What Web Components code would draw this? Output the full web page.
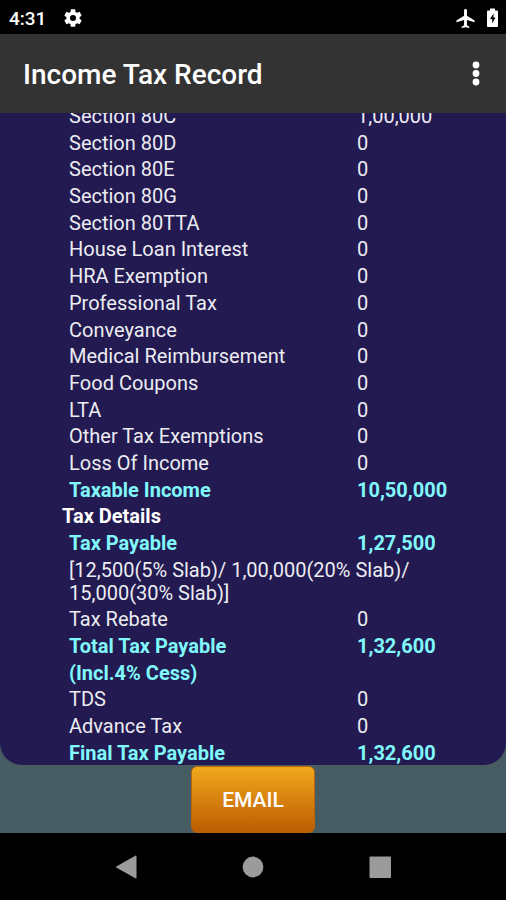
<!DOCTYPE html>
<html lang="en">
<head>
<meta charset="UTF-8">
<meta name="viewport" content="width=device-width, initial-scale=1">
<title>Income Tax Record</title>
<style>
  html, body {
    height: 100%;
    margin: 0;
  }
  body {
    font-family: Roboto, "Liberation Sans", sans-serif;
    font-size: 20px;
    line-height: 23px;
    background: #000;
    --panel: #221a50;
    --highlight: #80f8fc;
    --text: #ececf2;
  }
</style>
</head>
<body>
<tax-app>
  <status-bar slot="top" time="4:31"></status-bar>
  <app-bar slot="top">Income Tax Record</app-bar>
  <tax-record></tax-record>
  <action-button slot="actions">EMAIL</action-button>
  <nav-bar slot="bottom"></nav-bar>
</tax-app>

<script>
  const rows = [
    { label: 'Section 80C', value: '1,00,000' },
    { label: 'Section 80D', value: '0' },
    { label: 'Section 80E', value: '0' },
    { label: 'Section 80G', value: '0' },
    { label: 'Section 80TTA', value: '0' },
    { label: 'House Loan Interest', value: '0' },
    { label: 'HRA Exemption', value: '0' },
    { label: 'Professional Tax', value: '0' },
    { label: 'Conveyance', value: '0' },
    { label: 'Medical Reimbursement', value: '0' },
    { label: 'Food Coupons', value: '0' },
    { label: 'LTA', value: '0' },
    { label: 'Other Tax Exemptions', value: '0' },
    { label: 'Loss Of Income', value: '0' },
    { label: 'Taxable Income', value: '10,50,000', type: 'total' },
    { label: 'Tax Details', type: 'heading' },
    { label: 'Tax Payable', value: '1,27,500', type: 'total' },
    { label: '[12,500(5% Slab)/ 1,00,000(20% Slab)/ 15,000(30% Slab)]', type: 'note' },
    { label: 'Tax Rebate', value: '0' },
    { label: 'Total Tax Payable', value: '1,32,600', type: 'total' },
    { label: '(Incl.4% Cess)', value: '', type: 'total' },
    { label: 'TDS', value: '0' },
    { label: 'Advance Tax', value: '0' },
    { label: 'Final Tax Payable', value: '1,32,600', type: 'total' }
  ];

  class TaxApp extends HTMLElement {
    constructor() {
      super();
      this.attachShadow({ mode: 'open' });
      this.shadowRoot.innerHTML = `
        <style>
          :host {
            display: flex;
            flex-direction: column;
            height: 100%;
          }
          main {
            flex: 1;
            min-height: 0;
            display: flex;
            flex-direction: column;
            background: #475b63;
          }
          .actions {
            display: flex;
            justify-content: center;
            padding-top: 1px;
          }
        </style>
        <slot name="top"></slot>
        <main>
          <slot></slot>
          <div class="actions"><slot name="actions"></slot></div>
        </main>
        <slot name="bottom"></slot>
      `;
    }
  }

  class StatusBar extends HTMLElement {
    constructor() {
      super();
      this.attachShadow({ mode: 'open' });
    }

    connectedCallback() {
      this.shadowRoot.innerHTML = `
        <style>
          :host {
            display: flex;
            align-items: center;
            box-sizing: border-box;
            height: 34px;
            padding: 2px 7px 0 9px;
            background: #000;
            color: #fff;
            font-size: 19px;
            font-weight: 500;
          }
          svg { fill: #fff; }
          .gear { margin-left: 16px; }
          .right {
            display: flex;
            align-items: center;
            gap: 9px;
            margin-left: auto;
          }
        </style>
        <span>${this.getAttribute('time')}</span>
        <svg class="gear" width="22" height="22" viewBox="0 0 24 24">
          <path d="M19.14 12.94c.04-.3.06-.61.06-.94s-.02-.64-.07-.94l2.03-1.58c.18-.14.23-.41.12-.61l-1.92-3.32c-.12-.22-.37-.29-.59-.22l-2.39.96c-.5-.38-1.03-.7-1.62-.94l-.36-2.54A.48.48 0 0 0 13.92 2.4h-3.84c-.24 0-.43.17-.47.41l-.36 2.54c-.59.24-1.13.57-1.62.94l-2.39-.96c-.22-.08-.47 0-.59.22L2.74 8.87c-.12.21-.08.47.12.61l2.03 1.58c-.05.3-.09.63-.09.94s.02.64.07.94l-2.03 1.58c-.18.14-.23.41-.12.61l1.92 3.32c.12.22.37.29.59.22l2.39-.96c.5.38 1.03.7 1.62.94l.36 2.54c.05.24.24.41.48.41h3.84c.24 0 .44-.17.47-.41l.36-2.54c.59-.24 1.13-.56 1.62-.94l2.39.96c.22.08.47 0 .59-.22l1.92-3.32c.12-.22.07-.47-.12-.61l-2.01-1.58zM12 15.3a3.3 3.3 0 1 1 0-6.6 3.3 3.3 0 0 1 0 6.6z"/>
        </svg>
        <div class="right">
          <svg width="23" height="23" viewBox="0 0 24 24">
            <path d="M21.5 16v-2l-8-5V3.500a1.500 1.500 0 0 0-3 0V9l-8 5v2l8-2.500V19l-2.500 1.500V22l4-1 4 1v-1.500L13.500 19v-5.500z"/>
          </svg>
          <svg width="13" height="20" viewBox="0 0 13 20">
            <path fill-rule="evenodd" d="M4 0.500h5V2.500h1.800c.8 0 1.200.5 1.200 1.200v14.100c0 .8-.4 1.200-1.200 1.200H2.200C1.400 19 1 18.600 1 17.800V3.700C1 3 1.400 2.500 2.200 2.500H4zM7.500 5.500L4 11h2.200v4.500L9.500 9.500H7.500z"/>
          </svg>
        </div>
      `;
    }
  }

  class AppBar extends HTMLElement {
    constructor() {
      super();
      this.attachShadow({ mode: 'open' });
      this.shadowRoot.innerHTML = `
        <style>
          :host {
            display: flex;
            align-items: center;
            justify-content: space-between;
            box-sizing: border-box;
            height: 79px;
            padding: 3px 18px 0 23px;
            background: #333;
            color: #fff;
          }
          h1 {
            margin: 0;
            font-size: 28px;
            line-height: 32px;
            font-weight: 500;
          }
          button {
            display: flex;
            padding: 0;
            border: 0;
            background: none;
          }
        </style>
        <h1><slot></slot></h1>
        <button type="button" aria-label="More options">
          <svg width="24" height="30" viewBox="0 0 24 30" fill="#fff">
            <circle cx="12" cy="5" r="3.400"/>
            <circle cx="12" cy="13.500" r="3.400"/>
            <circle cx="12" cy="22" r="3.400"/>
          </svg>
        </button>
      `;
    }
  }

  class TaxRecord extends HTMLElement {
    constructor() {
      super();
      this.attachShadow({ mode: 'open' });
    }

    connectedCallback() {
      this.render();
    }

    renderRow(row) {
      if (row.type === 'heading') {
        return `<tr class="heading"><th>${row.label}</th></tr>`;
      }
      if (row.type === 'note') {
        return `<tr class="note"><td colspan="2">${row.label}</td></tr>`;
      }
      return `<tr class="${row.type || ''}"><td>${row.label}</td><td>${row.value}</td></tr>`;
    }

    render() {
      this.shadowRoot.innerHTML = `
        <style>
          :host {
            flex: 1;
            min-height: 0;
            display: flex;
            flex-direction: column;
            overflow: hidden;
            border-radius: 0 0 22px 22px;
            background: var(--panel);
            color: var(--text);
          }
          /* list is scrolled: the first row slides under the app bar */
          table {
            flex: 1;
            display: flex;
            margin-top: -8px;
            padding: 0 5px 0 62px;
          }
          tbody {
            flex: 1;
            display: flex;
            flex-direction: column;
            justify-content: space-between;
          }
          tr {
            display: grid;
            grid-template-columns: 2fr 1fr;
            padding-left: 7px;
          }
          td, th {
            padding: 0;
            text-align: left;
          }
          .total {
            color: var(--highlight);
            font-weight: 700;
          }
          .heading {
            padding-left: 0;
            color: #fff;
          }
          .note { display: block; }
          .note td { display: block; }
        </style>
        <table>
          <tbody>${rows.map(row => this.renderRow(row)).join('')}</tbody>
        </table>
      `;
    }
  }

  class ActionButton extends HTMLElement {
    constructor() {
      super();
      this.attachShadow({ mode: 'open' });
      this.shadowRoot.innerHTML = `
        <style>
          :host { display: block; }
          button {
            display: block;
            height: 67px;
            padding: 0 30px;
            border: 1px solid #b8650c;
            border-radius: 6px;
            background: linear-gradient(#f2a81c, #bc5c02);
            color: #fff;
            font: 500 21px/24px Roboto, "Liberation Sans", sans-serif;
          }
        </style>
        <button type="button"><slot></slot></button>
      `;
    }
  }

  class NavBar extends HTMLElement {
    constructor() {
      super();
      this.attachShadow({ mode: 'open' });
      this.shadowRoot.innerHTML = `
        <style>
          :host {
            display: flex;
            align-items: center;
            justify-content: center;
            height: 67px;
            background: #000;
          }
          button {
            display: flex;
            justify-content: center;
            width: 25%;
            padding: 0;
            border: 0;
            background: none;
          }
          svg { fill: #9b9b9b; }
        </style>
        <button type="button" aria-label="Back">
          <svg width="24" height="24" viewBox="0 0 24 24"><path d="M21.500 1.300v21.400c0 .6-.6 1-1.200.6L1.300 12.600c-.5-.3-.5-.9 0-1.200L20.300.7c.6-.4 1.200 0 1.200.6z"/></svg>
        </button>
        <button type="button" aria-label="Home">
          <svg width="24" height="24" viewBox="0 0 24 24"><circle cx="12" cy="12" r="10.400"/></svg>
        </button>
        <button type="button" aria-label="Recent apps">
          <svg width="24" height="24" viewBox="0 0 24 24"><rect x="1.500" y="1.500" width="21.500" height="21.500" rx="1"/></svg>
        </button>
      `;
    }
  }

  customElements.define('tax-app', TaxApp);
  customElements.define('status-bar', StatusBar);
  customElements.define('app-bar', AppBar);
  customElements.define('tax-record', TaxRecord);
  customElements.define('action-button', ActionButton);
  customElements.define('nav-bar', NavBar);
</script>
</body>
</html>
